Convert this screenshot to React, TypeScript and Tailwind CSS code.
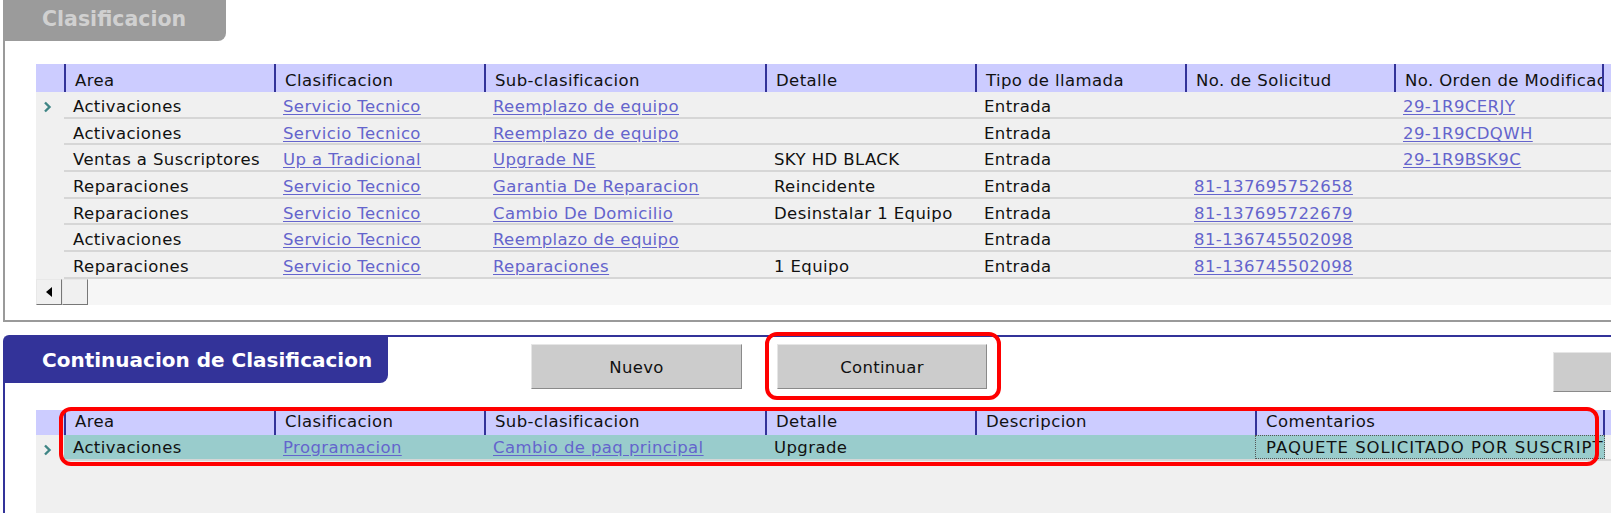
import React from 'react';

const topCols = ['Area', 'Clasificacion', 'Sub-clasificacion', 'Detalle', 'Tipo de llamada', 'No. de Solicitud', 'No. Orden de Modificacion'];

type Cell = { t: string; link?: boolean };

const topRows: Cell[][] = [
  [{ t: 'Activaciones' }, { t: 'Servicio Tecnico', link: true }, { t: 'Reemplazo de equipo', link: true }, { t: '' }, { t: 'Entrada' }, { t: '' }, { t: '29-1R9CERJY', link: true }],
  [{ t: 'Activaciones' }, { t: 'Servicio Tecnico', link: true }, { t: 'Reemplazo de equipo', link: true }, { t: '' }, { t: 'Entrada' }, { t: '' }, { t: '29-1R9CDQWH', link: true }],
  [{ t: 'Ventas a Suscriptores' }, { t: 'Up a Tradicional', link: true }, { t: 'Upgrade NE', link: true }, { t: 'SKY HD BLACK' }, { t: 'Entrada' }, { t: '' }, { t: '29-1R9BSK9C', link: true }],
  [{ t: 'Reparaciones' }, { t: 'Servicio Tecnico', link: true }, { t: 'Garantia De Reparacion', link: true }, { t: 'Reincidente' }, { t: 'Entrada' }, { t: '81-137695752658', link: true }, { t: '' }],
  [{ t: 'Reparaciones' }, { t: 'Servicio Tecnico', link: true }, { t: 'Cambio De Domicilio', link: true }, { t: 'Desinstalar 1 Equipo' }, { t: 'Entrada' }, { t: '81-137695722679', link: true }, { t: '' }],
  [{ t: 'Activaciones' }, { t: 'Servicio Tecnico', link: true }, { t: 'Reemplazo de equipo', link: true }, { t: '' }, { t: 'Entrada' }, { t: '81-136745502098', link: true }, { t: '' }],
  [{ t: 'Reparaciones' }, { t: 'Servicio Tecnico', link: true }, { t: 'Reparaciones', link: true }, { t: '1 Equipo' }, { t: 'Entrada' }, { t: '81-136745502098', link: true }, { t: '' }],
];

const bottomCols = ['Area', 'Clasificacion', 'Sub-clasificacion', 'Detalle', 'Descripcion', 'Comentarios'];

const Chevron = () => (
  <svg width="9" height="12" viewBox="0 0 9 12" className="ml-[7px] mt-[3px]">
    <path d="M2 1.5 L6.5 6 L2 10.5" fill="none" stroke="#3f8585" strokeWidth="2.4" />
  </svg>
);

const CellText = ({ c, top }: { c: Cell; top?: boolean }) => (
  <div className={`pl-[9px] ${top ? 'pt-[6px]' : 'pt-[3px]'} flex items-center overflow-hidden whitespace-nowrap`}>
    {c.link ? <span className="text-[#6464cc] underline underline-offset-2">{c.t}</span> : <span>{c.t}</span>}
  </div>
);

const btn = 'bg-[#cccccc] border border-t-[#e6e6e6] border-l-[#e6e6e6] border-r-[#8a8a8a] border-b-[#8a8a8a] text-[16.5px] tracking-[0.3px] pt-[3px]';

const App = () => {
  return (
    <div className="w-[1611px] h-[513px] overflow-hidden bg-white font-['DejaVu_Sans',sans-serif] text-[16.5px] tracking-[0.4px] text-[#111]">
      {/* Clasificacion */}
      <div className="pl-[3px]">
        <div className="w-[223px] h-[41px] bg-[#9b9b9b] rounded-br-[8px] pl-[39px] pb-[3px] flex items-center text-[20.5px] font-bold tracking-normal text-[#d0d0d0]">
          Clasificacion
        </div>
        <div className="h-[281px] border-l-2 border-b-2 border-[#9a9a9a] pt-[23px] pl-[31px]">
          <div className="bg-[#f0f0f0]">
            <div className="flex h-[28px] bg-[#ccccff]">
              <div className="w-[28px] shrink-0" />
              <div className="flex-1 grid grid-cols-[210px_210px_281px_210px_210px_209px_208px_1fr]">
                {topCols.map((c) => (
                  <div key={c} className="border-l-2 border-[#333399] pl-[9px] pt-[6px] flex items-center whitespace-nowrap overflow-hidden">
                    {c}
                  </div>
                ))}
                <div className="border-l-2 border-[#333399]" />
              </div>
            </div>
            {topRows.map((r, i) => (
              <div key={i} className="flex h-[26.7px]">
                <div className="w-[28px] shrink-0 flex items-center">{i === 0 && <Chevron />}</div>
                <div className="flex-1 grid grid-cols-[210px_210px_281px_210px_210px_209px_208px_1fr] border-b-2 border-[#d6d6d6]">
                  {r.map((c, j) => (
                    <CellText key={j} c={c} top />
                  ))}
                  <div />
                </div>
              </div>
            ))}
            <div className="flex h-[26px] bg-[#f6f6f6]">
              <div className="w-[26px] h-full bg-[#f0f0f0] border border-t-[#e8e8e8] border-l-[#e8e8e8] border-r-[#777] border-b-[#777] flex items-center justify-center">
                <svg width="6" height="10" viewBox="0 0 6 10">
                  <path d="M6 0 L0 5 L6 10 Z" fill="#000" />
                </svg>
              </div>
              <div className="w-[26px] h-full bg-[#f0f0f0] border border-t-[#e8e8e8] border-l-[#e8e8e8] border-r-[#777] border-b-[#777]" />
              <div className="flex-1" />
            </div>
          </div>
        </div>
      </div>

      {/* Continuacion de Clasificacion */}
      <div className="pl-[3px] pt-[13px]">
        <div className="h-[178px] border-t-2 border-l-2 border-[#333399] rounded-tl-[6px]">
          <div className="flex items-start h-[46px]">
            <div className="w-[383px] h-[46px] shrink-0 bg-[#333399] rounded-br-[8px] pl-[37px] flex items-center text-[20px] font-bold tracking-normal text-white">
              Continuacion de Clasificacion
            </div>
            <button className={`ml-[143px] mt-[7px] w-[211px] h-[45px] shrink-0 ${btn}`}>Nuevo</button>
            <div className="relative ml-[35px] mt-[7px] shrink-0">
              <button className={`w-[210px] h-[45px] ${btn}`}>Continuar</button>
              <span className="absolute left-[-12px] top-[-12px] w-[236px] h-[68px] border-4 border-[#ff0000] rounded-[12px]" />
            </div>
            <button className={`ml-[566px] mt-[15px] w-[100px] h-[40px] shrink-0 ${btn}`} />
          </div>

          <div className="relative mt-[27px] ml-[31px] bg-[#f0f0f0] h-[103px]">
            <div className="flex h-[25px] bg-[#ccccff]">
              <div className="w-[28px] shrink-0" />
              <div className="flex-1 grid grid-cols-[210px_210px_281px_210px_280px_348px_1fr]">
                {bottomCols.map((c) => (
                  <div key={c} className="border-l-2 border-[#333399] pl-[9px] flex items-center whitespace-nowrap overflow-hidden">
                    {c}
                  </div>
                ))}
                <div className="border-l-2 border-[#333399]" />
              </div>
            </div>
            <div className="flex h-[26px]">
              <div className="w-[28px] shrink-0 flex items-center">
                <Chevron />
              </div>
              <div className="flex-1 grid grid-cols-[210px_210px_281px_210px_280px_350px_1fr] bg-[#99cccc] border-b-2 border-[#d6d6d6]">
                <CellText c={{ t: 'Activaciones' }} />
                <CellText c={{ t: 'Programacion', link: true }} />
                <CellText c={{ t: 'Cambio de paq principal', link: true }} />
                <CellText c={{ t: 'Upgrade' }} />
                <div />
                <div className="border border-dotted border-[#555] pl-[10px] pt-[3px] flex items-center whitespace-nowrap overflow-hidden tracking-[1px]">
                  PAQUETE SOLICITADO POR SUSCRIPTOR
                </div>
                <div className="bg-[#f0f0f0]" />
              </div>
            </div>
            <span className="absolute left-[23px] top-[-3px] w-[1540px] h-[59px] border-4 border-[#ff0000] rounded-[12px]" />
          </div>
        </div>
      </div>
    </div>
  );
};

export default App;
